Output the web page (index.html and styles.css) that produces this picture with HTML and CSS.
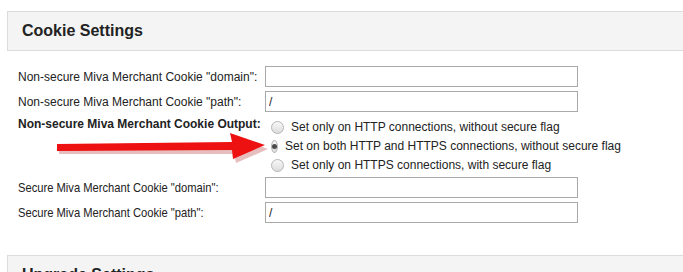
FILE: index.html
```html
<!DOCTYPE html>
<html lang="en">
<head>
    <meta charset="UTF-8">
    <title>Cookie Settings</title>
    <link rel="stylesheet" href="styles.css">
</head>
<body>
    <div class="page">
        <div class="section-header">
            <h2>Cookie Settings</h2>
        </div>

        <div class="settings">
            <label class="field-label">Non-secure Miva Merchant Cookie "domain":</label>
            <input type="text" class="field-input" value="">

            <label class="field-label">Non-secure Miva Merchant Cookie "path":</label>
            <input type="text" class="field-input" value="/">

            <div class="field-label strong">Non-secure Miva Merchant Cookie Output:</div>
            <div class="radio-group">
                <label class="radio-row"><input type="radio" name="output"> Set only on HTTP connections, without secure flag</label>
                <label class="radio-row"><input type="radio" name="output" checked> Set on both HTTP and HTTPS connections, without secure flag</label>
                <label class="radio-row"><input type="radio" name="output"> Set only on HTTPS connections, with secure flag</label>
            </div>

            <label class="field-label narrow">Secure Miva Merchant Cookie "domain":</label>
            <input type="text" class="field-input" value="">

            <label class="field-label narrow">Secure Miva Merchant Cookie "path":</label>
            <input type="text" class="field-input" value="/">
        </div>

        <div class="section-header next">
            <h2>Upgrade Settings</h2>
        </div>

        <!-- annotation arrow drawn over the form -->
        <svg class="arrow" width="220" height="34" viewBox="0 0 220 34">
            <polygon points="3,14 178,12 176,3 212,16 180,30 178,21 3,21" fill="#b44" opacity="0.35" transform="translate(1,2)"/>
            <polygon points="2,13 177,11 175,2 210,14 178,28 177,19 2,20" fill="#e11"/>
        </svg>
    </div>
</body>
</html>
```

FILE: styles.css
```css
/* Basic reset */
* {
    margin: 0;
    padding: 0;
    box-sizing: border-box;
}

body {
    background-color: #fff;
    font-family: 'Liberation Sans', Arial, sans-serif;
    font-size: 12px;
    color: #222;
    overflow: hidden;
}

.page {
    position: relative;
    padding-top: 11px;
}

/* Grey section bars */
.section-header {
    margin-left: 7px;
    margin-right: -10px;
    height: 40px;
    border: 1px solid #dcdcdc;
    background-color: #f4f4f4;
    padding-left: 14px;
    display: flex;
    align-items: center;
}

.section-header h2 {
    font-size: 16px;
    font-weight: bold;
    color: #222;
}

.section-header.next {
    margin-top: 32px;
}

/* Form rows */
.settings {
    display: grid;
    grid-template-columns: 247px 313px;
    row-gap: 4px;
    padding-left: 18px;
    margin-top: 15px;
    align-items: center;
}

.field-label {
    color: #222;
    white-space: nowrap;
}

/* the secure labels render condensed in the original */
.field-label.narrow {
    font-size: 13px;
    transform: scaleX(0.86);
    transform-origin: left center;
}

.field-label.strong {
    font-weight: bold;
    align-self: start;
    padding-top: 1px;
}

.field-input {
    height: 21px;
    border: 1px solid #a9a9a9;
    font-family: 'Liberation Sans', Arial, sans-serif;
    font-size: 12px;
    padding: 0 3px;
    color: #222;
    outline: none;
}

/* Radio list */
.radio-group {
    display: flex;
    flex-direction: column;
    gap: 3px;
    margin-left: 6px;
    padding-top: 3px;
}

.radio-row {
    display: flex;
    align-items: center;
    gap: 7px;
    white-space: nowrap;
    height: 16px;
}

.radio-row input {
    appearance: none;
    width: 13px;
    height: 13px;
    border-radius: 50%;
    border: 1px solid #b5b5b5;
    background: linear-gradient(#f8f8f8, #dcdcdc);
    display: flex;
    align-items: center;
    justify-content: center;
}

.radio-row input:checked::after {
    content: "";
    width: 5px;
    height: 5px;
    border-radius: 50%;
    background-color: #4a4a4a;
}

/* Red annotation arrow */
.arrow {
    position: absolute;
    left: 55px;
    top: 131px;
}
```
